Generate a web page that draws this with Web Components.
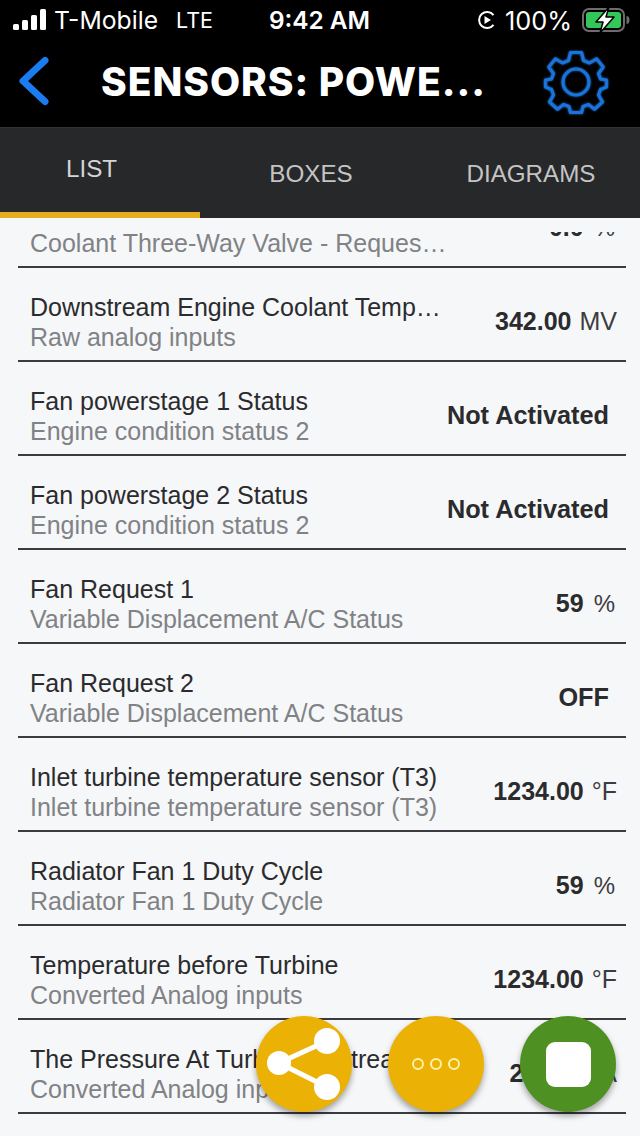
<!DOCTYPE html>
<html>
<head>
<meta charset="utf-8">
<style>
  html, body { margin: 0; padding: 0; }
  body { width: 640px; height: 1136px; overflow: hidden; background: #f6f7f9; font-family: "Liberation Sans", sans-serif; }
</style>
</head>
<body>
<app-screen>
  <status-bar></status-bar>
  <nav-header title="SENSORS: POWE..."></nav-header>
  <tab-bar></tab-bar>
  <sensor-list>
    <sensor-row class="cut" sub="Coolant Three-Way Valve - Reques…" value="0.0" unit="%"></sensor-row>
    <sensor-row name="Downstream Engine Coolant Temp…" sub="Raw analog inputs" value="342.00" unit="MV"></sensor-row>
    <sensor-row name="Fan powerstage 1 Status" sub="Engine condition status 2" value="Not Activated" inset></sensor-row>
    <sensor-row name="Fan powerstage 2 Status" sub="Engine condition status 2" value="Not Activated" inset></sensor-row>
    <sensor-row name="Fan Request 1" sub="Variable Displacement A/C Status" value="59" unit="%"></sensor-row>
    <sensor-row name="Fan Request 2" sub="Variable Displacement A/C Status" value="OFF" inset></sensor-row>
    <sensor-row name="Inlet turbine temperature sensor (T3)" sub="Inlet turbine temperature sensor (T3)" value="1234.00" unit="°F"></sensor-row>
    <sensor-row name="Radiator Fan 1 Duty Cycle" sub="Radiator Fan 1 Duty Cycle" value="59" unit="%"></sensor-row>
    <sensor-row name="Temperature before Turbine" sub="Converted Analog inputs" value="1234.00" unit="°F"></sensor-row>
    <sensor-row name="The Pressure At Turbine Upstream" sub="Converted Analog inputs" value="2000" unit="kPA"></sensor-row>
  </sensor-list>
  <fab-group></fab-group>
</app-screen>

<script>
class AppScreen extends HTMLElement {
  constructor() {
    super();
    this.attachShadow({ mode: 'open' });
    this.shadowRoot.innerHTML = `
      <style>
        :host { display: flex; flex-direction: column; position: relative; width: 640px; height: 1136px; overflow: hidden; }
      </style>
      <slot></slot>
    `;
  }
}
customElements.define('app-screen', AppScreen);

class StatusBar extends HTMLElement {
  constructor() {
    super();
    this.attachShadow({ mode: 'open' });
    this.shadowRoot.innerHTML = `
      <style>
        :host { display: grid; grid-template-columns: 1fr auto 1fr; align-items: center; height: 40px; background: #000; color: #fff; font: 500 24px Inter, sans-serif; box-sizing: border-box; padding: 0 10px 0 13px; }
        .left, .right { display: flex; align-items: center; }
        .right { justify-content: flex-end; }
        .carrier { margin-left: 8px; font-weight: 400; font-size: 24.7px; }
        .lte { margin-left: 18px; font-size: 21.5px; font-weight: 400; }
        .time { font-weight: 600; font-size: 24.4px; position: relative; left: -2px; }
        .pct { margin-left: 8px; font-weight: 400; font-size: 25.3px; }
        .batt { margin-left: 10px; }
        svg { display: block; }
      </style>
      <div class="left">
        <svg width="33" height="22" viewBox="0 0 33 22">
          <rect x="0" y="15" width="6" height="6" rx="1.5" fill="#fff"/>
          <rect x="9" y="11" width="6" height="10" rx="1.5" fill="#fff"/>
          <rect x="18" y="6" width="6" height="15" rx="1.5" fill="#fff"/>
          <rect x="27" y="0" width="6" height="21" rx="1.5" fill="#fff"/>
        </svg>
        <span class="carrier">T-Mobile</span>
        <span class="lte">LTE</span>
      </div>
      <div class="time">9:42 AM</div>
      <div class="right">
        <svg width="20" height="22" viewBox="0 0 20 22">
          <path d="M16.5 6.2A8 8 0 1 0 16.5 15.8" fill="none" stroke="#fff" stroke-width="2"/>
          <path d="M7.5 7 L14 11 L7.5 15 Z" fill="#fff"/>
        </svg>
        <span class="pct">100%</span>
        <svg class="batt" width="48" height="26" viewBox="0 0 48 26">
          <rect x="1" y="2" width="41" height="22" rx="6" fill="none" stroke="#6d6d6d" stroke-width="2"/>
          <rect x="4" y="5" width="35" height="16" rx="3" fill="#33c759"/>
          <path d="M44.5 9 a3 4 0 0 1 0 8 Z" fill="#6d6d6d"/>
          <path d="M27 0 L14 15 H21 L18 26 L32 10 H24 Z" fill="#fff" stroke="#000" stroke-width="1.5" stroke-linejoin="round"/>
        </svg>
      </div>
    `;
  }
}
customElements.define('status-bar', StatusBar);

class NavHeader extends HTMLElement {
  constructor() {
    super();
    this.attachShadow({ mode: 'open' });
    this.shadowRoot.innerHTML = `
      <style>
        :host { display: flex; align-items: center; height: 88px; background: #000; border-bottom: 1px solid #333; box-sizing: border-box; color: #fff; }
        .back { margin: 0 0 6px 18px; width: 32px; height: 52px; }
        h1 { margin: 0 0 5px 51px; flex: 1; font: 800 39px Inter, sans-serif; letter-spacing: 0.95px; white-space: nowrap; }
        .gear { margin: 0 31px 4px 0; width: 66px; height: 66px; filter: drop-shadow(0 0 1px #1a73d8); }
      </style>
      <svg class="back" viewBox="0 0 32 52"><path d="M27 5.5 L5 26 L27 46.5" fill="none" stroke="#1a7cf0" stroke-width="7" stroke-linecap="round" stroke-linejoin="round"/></svg>
      <h1>${this.getAttribute('title')}</h1>
      <svg class="gear" viewBox="0 0 66 66" fill="none" stroke="#1a73d8" stroke-width="3.2" stroke-linejoin="round">
        <path d="M27.5 3.5 H38.5 L40.5 11.5 L46.5 14 L53.5 9.8 L60.2 18 L55.5 24.5 L57.5 30 L63.5 31 V38 L57.5 40.5 L55.5 46 L59.5 53 L51.5 60.2 L45.5 55.5 L40 57.5 L38.5 63.5 H27.5 L26 57.5 L20.5 55.5 L14.5 60.2 L6.5 53 L10.5 46 L8.5 40.5 L2.5 38 V31 L8.5 30 L10.5 24.5 L5.8 18 L12.5 9.8 L19.5 14 L25.5 11.5 Z"/>
        <circle cx="33" cy="33" r="13"/>
      </svg>
    `;
  }
}
customElements.define('nav-header', NavHeader);

class TabBar extends HTMLElement {
  constructor() {
    super();
    this.attachShadow({ mode: 'open' });
    this.shadowRoot.innerHTML = `
      <style>
        :host { display: flex; height: 90px; background: #27282a; font: 400 24.2px "Liberation Sans", sans-serif; color: #c4c4c4; }
        .tab { box-sizing: border-box; display: flex; align-items: center; justify-content: center; }
        .tab.on { width: 200px; border-bottom: 6px solid #e6ae1e; padding: 0 17px 2px 0; color: #d4d4d4; }
        .boxes { width: 222px; padding-top: 1px; }
        .diagrams { width: 218px; padding-top: 1px; }
      </style>
      <div class="tab on">LIST</div>
      <div class="tab boxes">BOXES</div>
      <div class="tab diagrams">DIAGRAMS</div>
    `;
  }
}
customElements.define('tab-bar', TabBar);

class SensorList extends HTMLElement {
  constructor() {
    super();
    this.attachShadow({ mode: 'open' });
    this.shadowRoot.innerHTML = `
      <style>
        :host { display: block; position: relative; flex: 1; min-height: 0; overflow: hidden; padding: 0 14px 0 18px; background: #f6f7f9; }
        /* the scrolled row slides under this strip */
        .edge { position: absolute; left: 0; right: 0; top: 0; height: 14px; background: #f6f7f9; z-index: 1; }
      </style>
      <div class="edge"></div>
      <slot></slot>
    `;
  }
}
customElements.define('sensor-list', SensorList);

class SensorRow extends HTMLElement {
  constructor() {
    super();
    this.attachShadow({ mode: 'open' });
    const name = this.getAttribute('name');
    const sub = this.getAttribute('sub');
    const value = this.getAttribute('value');
    const unit = this.getAttribute('unit');
    const inset = this.hasAttribute('inset');
    this.shadowRoot.innerHTML = `
      <style>
        :host { display: block; box-sizing: border-box; height: 94px; border-bottom: 2px solid #3c3c40; }
        :host(.cut) { margin-top: -44px; }
        .row { display: flex; align-items: center; height: 100%; box-sizing: border-box; padding: 16px 9px 0 12px; }
        .text { flex: 1; min-width: 0; line-height: 30px; white-space: nowrap; font-size: 25px; }
        .name { color: #2b2b2d; min-height: 30px; }
        .sub { color: #808285; }
        .val { font-weight: 700; font-size: 25px; color: #2b2b2d; white-space: nowrap; margin-bottom: 2px; }
        .val.inset { margin-right: 8px; font-size: 25.3px; }
        .unit { font-weight: 400; color: #3c3c40; margin-left: 8px; }
        .unit.pct { font-size: 24px; margin: 0 2px 0 10px; }
      </style>
      <div class="row">
        <div class="text">
          <div class="name">${name || ''}</div>
          <div class="sub">${sub}</div>
        </div>
        <div class="val ${inset ? 'inset' : ''}">${value}${unit ? `<span class="unit ${unit === '%' ? 'pct' : ''}">${unit}</span>` : ''}</div>
      </div>
    `;
  }
}
customElements.define('sensor-row', SensorRow);

class FabGroup extends HTMLElement {
  constructor() {
    super();
    this.attachShadow({ mode: 'open' });
    this.shadowRoot.innerHTML = `
      <style>
        :host { position: absolute; left: 256px; top: 1016px; display: flex; gap: 36px; z-index: 2; }
        .fab { width: 96px; height: 96px; border-radius: 50%; background: #ebb105; box-shadow: 0 4px 6px rgba(0,0,0,.35); display: flex; align-items: center; justify-content: center; }
        .green { background: #4f9022; }
        .stop { width: 45px; height: 45px; border-radius: 9px; background: #fff; }
      </style>
      <div class="fab">
        <svg width="96" height="96" viewBox="0 0 96 96">
          <path d="M23 47 L71 25 M23 47 L71 71" stroke="#fff" stroke-width="5" fill="none"/>
          <circle cx="23" cy="47" r="12" fill="#fff"/>
          <circle cx="71" cy="25" r="13" fill="#fff"/>
          <circle cx="71" cy="71" r="13" fill="#fff"/>
        </svg>
      </div>
      <div class="fab">
        <svg width="50" height="14" viewBox="0 0 50 14" fill="none" stroke="#fff2a8" stroke-width="2">
          <circle cx="7" cy="7" r="5"/><circle cx="25" cy="7" r="5"/><circle cx="43" cy="7" r="5"/>
        </svg>
      </div>
      <div class="fab green"><div class="stop"></div></div>
    `;
  }
}
customElements.define('fab-group', FabGroup);
</script>
</body>
</html>
